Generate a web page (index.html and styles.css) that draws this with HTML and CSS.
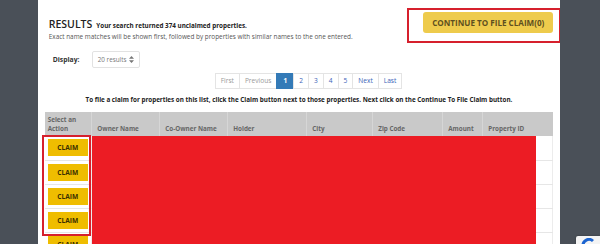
FILE: index.html
```html
<!DOCTYPE html>
<html lang="en">
<head>
  <meta charset="UTF-8">
  <meta name="viewport" content="width=device-width, initial-scale=1.0">
  <title>Unclaimed Property - Results</title>
  <link rel="stylesheet" href="styles.css">
</head>
<body>
  <div class="page">
    <div class="side"></div>

    <div class="content">
      <div class="top">
        <div class="intro">
          <div class="title-line">
            <h1>RESULTS</h1>
            <span class="count">Your search returned 374 unclaimed properties.</span>
          </div>
          <p class="note">Exact name matches will be shown first, followed by properties with similar names to the one entered.</p>
          <div class="display-row">
            <label>Display:</label>
            <div class="select">
              20 results
              <svg width="5" height="7" viewBox="0 0 5 7"><path d="M2.5 0 L5 2.8 H0 Z M2.5 7 L5 4.2 H0 Z" fill="#777"/></svg>
            </div>
          </div>
        </div>
        <div class="mark continue-mark">
          <button class="continue">CONTINUE TO FILE CLAIM(0)</button>
        </div>
      </div>

      <div class="pager">
        <a class="disabled">First</a>
        <a class="disabled">Previous</a>
        <a class="active">1</a>
        <a>2</a>
        <a>3</a>
        <a>4</a>
        <a>5</a>
        <a>Next</a>
        <a>Last</a>
      </div>

      <p class="instructions">To file a claim for properties on this list, click the Claim button next to those properties. Next click on the Continue To File Claim button.</p>

      <div class="table-wrap">
        <table class="results">
          <thead>
            <tr>
              <th class="c-action">Select an Action</th>
              <th class="c-owner">Owner Name</th>
              <th class="c-coowner">Co-Owner Name</th>
              <th class="c-holder">Holder</th>
              <th class="c-city">City</th>
              <th class="c-zip">Zip Code</th>
              <th class="c-amount">Amount</th>
              <th class="c-id">Property ID</th>
            </tr>
          </thead>
          <tbody>
            <tr><td><button class="claim">CLAIM</button></td><td></td><td></td><td></td><td></td><td></td><td></td><td></td></tr>
            <tr><td><button class="claim">CLAIM</button></td><td></td><td></td><td></td><td></td><td></td><td></td><td></td></tr>
            <tr><td><button class="claim">CLAIM</button></td><td></td><td></td><td></td><td></td><td></td><td></td><td></td></tr>
            <tr><td><button class="claim">CLAIM</button></td><td></td><td></td><td></td><td></td><td></td><td></td><td></td></tr>
            <tr><td><button class="claim">CLAIM</button></td><td></td><td></td><td></td><td></td><td></td><td></td><td></td></tr>
          </tbody>
        </table>
        <div class="redacted"></div>
        <div class="mark claim-mark"></div>
      </div>
    </div>

    <div class="side"></div>
  </div>

  <div class="captcha">
    <svg width="14" height="8" viewBox="0 0 14 8"><path d="M2 8 A6 6 0 0 1 12 3" stroke="#1c64d0" stroke-width="3" fill="none"/></svg>
  </div>
</body>
</html>
```

FILE: styles.css
```css
html, body {
  margin: 0;
  height: 244px;
  overflow: hidden;
}
body {
  font-family: "Open Sans", "Liberation Sans", sans-serif;
  color: #333;
}
.page {
  display: flex;
  height: 244px;
  overflow: hidden;
}
.side {
  width: 38px;
  background-color: #4a5058;
}
.side:last-child {
  width: 40px;
}
.content {
  flex: 1;
  background-color: #fff;
  padding: 0 7px;
}
.top {
  display: flex;
  justify-content: space-between;
  align-items: flex-start;
  padding-top: 8px;
  margin-right: -8px;
}
.intro {
  padding-left: 4px;
  padding-top: 9px;
}
.title-line {
  display: flex;
  align-items: baseline;
  gap: 4px;
}
h1 {
  margin: 0;
  font-size: 10.5px;
  font-weight: 600;
  color: #222;
  line-height: 14px;
}
.count {
  font-size: 6.3px;
  font-weight: 700;
  color: #222;
}
.note {
  margin: 1px 0 0;
  font-size: 6.4px;
  color: #555;
}
.display-row {
  display: flex;
  align-items: center;
  margin-top: 10px;
  padding-left: 4px;
}
.display-row label {
  font-size: 6.8px;
  font-weight: 700;
  color: #333;
  width: 39px;
}
.select {
  display: flex;
  align-items: center;
  gap: 3px;
  height: 15px;
  padding: 0 5px;
  border: 1px solid #e2e2e2;
  border-radius: 2px;
  font-size: 6.3px;
  color: #777;
}
.mark {
  border: 2px solid #d6202d;
}
.continue-mark {
  padding: 2px 6px 8px 14px;
}
.continue {
  display: block;
  width: 130px;
  height: 21px;
  border: none;
  border-radius: 3px;
  background-color: #eecb4c;
  color: #5e5020;
  font-family: inherit;
  font-size: 8.1px;
  font-weight: 700;
  padding: 0;
}
.pager {
  display: flex;
  justify-content: center;
  padding-left: 20px;
  margin-top: 5px;
}
.pager a {
  display: block;
  height: 14px;
  line-height: 14px;
  padding: 0 5px;
  border: 1px solid #e4e4e4;
  margin-left: -1px;
  font-size: 6.6px;
  color: #3a63b8;
}
.pager a.disabled {
  color: #999;
}
.pager a.active {
  background-color: #337ab7;
  border-color: #337ab7;
  color: #fff;
  font-weight: 700;
  padding: 0 6px;
}
.instructions {
  margin: 6px 0 0;
  text-align: center;
  font-size: 6.3px;
  font-weight: 700;
  color: #222;
}
.table-wrap {
  position: relative;
  margin-top: 8px;
}
.results {
  width: 508px;
  border-collapse: collapse;
  table-layout: fixed;
}
.results th {
  height: 24px;
  padding: 0 0 3px 5px;
  background-color: #c9c9c9;
  border-left: 1px solid #d6d6d6;
  text-align: left;
  vertical-align: bottom;
  font-size: 6.3px;
  font-weight: 700;
  color: #666;
  line-height: 9px;
  box-sizing: border-box;
}
.results th.c-action {
  vertical-align: top;
  padding: 3px 0 0 3px;
  border-left: none;
}
.c-action { width: 47px; }
.c-owner { width: 68px; }
.c-coowner { width: 68px; }
.c-holder { width: 79px; }
.c-city { width: 66px; }
.c-zip { width: 70px; }
.c-amount { width: 40px; }
.c-id { width: 70px; }
.results td {
  height: 24px;
  padding: 0;
  border-bottom: 1px solid #e6e6e6;
  border-right: 1px solid #ececec;
  box-sizing: border-box;
}
.results td:first-child {
  padding: 0 0 0 3px;
}
.claim {
  display: block;
  width: 40px;
  height: 17px;
  padding: 0;
  border: none;
  background-color: #efbd00;
  color: #3b2f00;
  font-family: inherit;
  font-size: 6.6px;
  font-weight: 700;
}
.redacted {
  position: absolute;
  left: 47px;
  right: 17px;
  top: 24px;
  height: 200px;
  background-color: #ec1c24;
}
.claim-mark {
  position: absolute;
  left: -3px;
  top: 23px;
  width: 45px;
  height: 97px;
}
.captcha {
  position: absolute;
  right: 0;
  top: 236px;
  width: 24px;
  height: 10px;
  background-color: #f4f4f4;
  border-radius: 2px 0 0 0;
  box-shadow: 0 0 2px rgba(0, 0, 0, 0.4);
  display: flex;
  justify-content: center;
  padding-top: 2px;
}
```
